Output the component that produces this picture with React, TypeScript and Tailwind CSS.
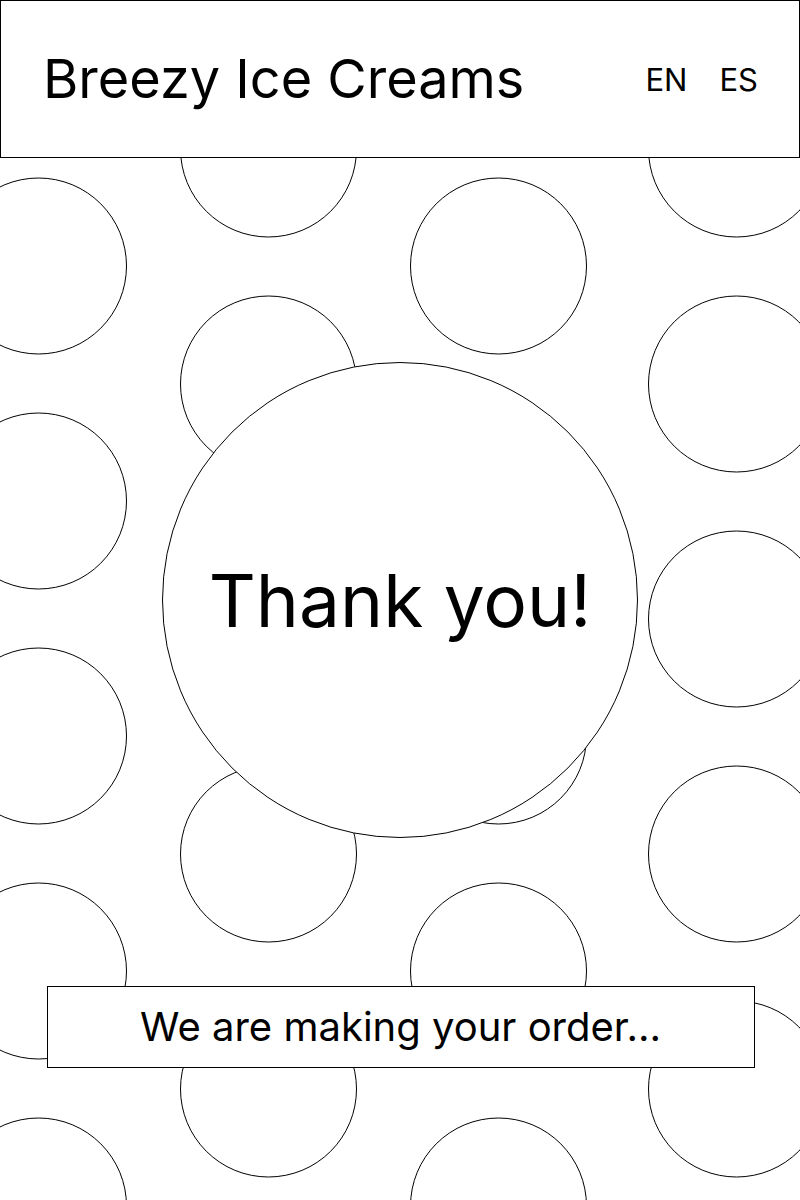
import React from 'react';

// staggered circle backdrop: [cx, cy]
const colA = [31, 266, 501, 736, 971, 1206];
const colB = [149, 384, 619, 854, 1089];
const dots: [number, number][] = [
  ...colA.map((y) => [38.5, y] as [number, number]),
  ...colB.map((y) => [268.5, y] as [number, number]),
  ...colA.map((y) => [498.5, y] as [number, number]),
  ...colB.map((y) => [736.5, y] as [number, number]),
];

const Backdrop: React.FC = () => (
  <svg className="absolute inset-0 w-full h-full" viewBox="0 0 800 1200" fill="none">
    {dots.map(([cx, cy], i) => (
      <circle key={i} cx={cx} cy={cy} r={88} stroke="#000" strokeWidth={1} />
    ))}
  </svg>
);

const App: React.FC = () => {
  return (
    <div className="relative w-[800px] h-[1200px] overflow-hidden bg-white text-black font-['Inter',sans-serif]">
      <Backdrop />

      <div className="relative flex flex-col items-center">
        <header className="w-full h-[158px] bg-white border border-black flex items-center justify-between pl-[42px] pr-[41px]">
          <h1 className="text-[54px] leading-none font-normal">Breezy Ice Creams</h1>
          <nav className="flex items-center gap-[32px] text-[31px] leading-none">
            <span>EN</span>
            <span>ES</span>
          </nav>
        </header>

        <div className="mt-[204px] w-[476px] h-[476px] rounded-full bg-white border border-black flex items-center justify-center">
          <span className="text-[73px] leading-none">Thank you!</span>
        </div>

        <div className="mt-[148px] ml-[1px] w-[708px] h-[82px] bg-white border border-black flex items-center justify-center">
          <span className="text-[40px] leading-none">We are making your order…</span>
        </div>
      </div>
    </div>
  );
};

export default App;
